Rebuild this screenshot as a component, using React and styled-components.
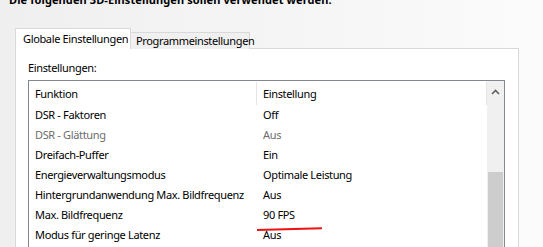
import React from 'react';
import styled, { createGlobalStyle } from 'styled-components';

const GlobalStyle = createGlobalStyle`
  body {
    margin: 0;
    font-family: "Noto Sans", "Liberation Sans", sans-serif;
    font-size: 11px;
    letter-spacing: -0.35px;
    color: #000;
  }
`;

const Page = styled.div`
  width: 543px;
  height: 247px;
  overflow: hidden;
  background: linear-gradient(to right, #efefef, #fbfbfb);
`;

const Title = styled.div`
  margin-top: -9px;
  height: 18px;
  line-height: 18px;
  padding-left: 9px;
  font-weight: bold;
  letter-spacing: 0.1px;
  white-space: nowrap;
`;

const TabStrip = styled.div`
  display: flex;
  align-items: flex-end;
  margin: 19px 0 0 15px;
  height: 21px;
`;

const Tab = styled.div`
  box-sizing: border-box;
  width: ${p => (p.$active ? 116 : 119)}px;
  height: ${p => (p.$active ? 21 : 17)}px;
  padding-left: ${p => (p.$active ? 7 : 5)}px;
  line-height: ${p => (p.$active ? 19 : 15)}px;
  background: ${p => (p.$active ? '#fff' : '#f0f0f0')};
  border: 1px solid #d9d9d9;
  border-bottom: none;
  ${p => !p.$active && 'border-left: none;'}
  position: relative;
  z-index: ${p => (p.$active ? 1 : 0)};
  white-space: nowrap;
`;

const Panel = styled.div`
  box-sizing: border-box;
  width: 504px;
  height: 220px;
  margin: -1px 0 0 15px;
  padding: 10px 0 0 12px;
  background: #fff;
  border: 1px solid #d9d9d9;
`;

const Label = styled.div`
  height: 18px;
  line-height: 18px;
`;

const ListBox = styled.div`
  box-sizing: border-box;
  margin-top: 3px;
  width: 477px;
  height: 200px;
  border: 1px solid #828790;
  display: grid;
  grid-template-columns: 1fr 17px;
`;

const Table = styled.div`
  display: flex;
  flex-direction: column;
`;

const Row = styled.div`
  display: grid;
  grid-template-columns: 228px 1fr;
  height: ${p => (p.$header ? 24 : 20)}px;
  align-items: center;
  color: ${p => (p.$disabled ? '#6d6d6d' : '#000')};
`;

const Cell = styled.div`
  position: relative;
  height: 100%;
  line-height: 20px;
  padding-left: 6px;
  white-space: nowrap;
  ${p => p.$mark && `
    &::after {
      content: '';
      position: absolute;
      left: 0;
      top: 24px;
      width: 65px;
      height: 2px;
      background: #f01010;
      transform: rotate(-1.5deg);
      transform-origin: left center;
    }
  `}
`;

const HeaderCell = styled(Cell)`
  margin-top: 1px;
  height: 23px;
  line-height: 23px;
  border-right: 1px solid #e5e5e5;
`;

const ScrollBar = styled.div`
  background: #f0f0f0;
  display: flex;
  flex-direction: column;
  align-items: center;
`;

const ArrowBtn = styled.div`
  height: 17px;
  display: flex;
  align-items: center;
  justify-content: center;
  color: #606060;
  margin-top: 2px;
`;

const Thumb = styled.div`
  margin-top: 72px;
  width: 15px;
  flex: 1;
  background: #cdcdcd;
`;

const rows = [
  ['DSR - Faktoren', 'Off'],
  ['DSR - Glättung', 'Aus', true],
  ['Dreifach-Puffer', 'Ein'],
  ['Energieverwaltungsmodus', 'Optimale Leistung'],
  ['Hintergrundanwendung Max. Bildfrequenz', 'Aus'],
  ['Max. Bildfrequenz', '90 FPS', false, true],
  ['Modus für geringe Latenz', 'Aus'],
];

export default function App() {
  return (
    <Page>
      <GlobalStyle />
      <Title>Die folgenden 3D-Einstellungen sollen verwendet werden.</Title>
      <TabStrip>
        <Tab $active>Globale Einstellungen</Tab>
        <Tab>Programmeinstellungen</Tab>
      </TabStrip>
      <Panel>
        <Label>Einstellungen:</Label>
        <ListBox>
          <Table>
            <Row $header>
              <HeaderCell>Funktion</HeaderCell>
              <HeaderCell>Einstellung</HeaderCell>
            </Row>
            {rows.map(([name, value, disabled, mark]) => (
              <Row key={name} $disabled={disabled}>
                <Cell>{name}</Cell>
                <Cell $mark={mark}>{value}</Cell>
              </Row>
            ))}
          </Table>
          <ScrollBar>
            <ArrowBtn>
              <svg width="9" height="6" viewBox="0 0 9 6">
                <path d="M1 5 L4.5 1.5 L8 5" fill="none" stroke="currentColor" strokeWidth="1.6" />
              </svg>
            </ArrowBtn>
            <Thumb />
          </ScrollBar>
        </ListBox>
      </Panel>
    </Page>
  );
}
